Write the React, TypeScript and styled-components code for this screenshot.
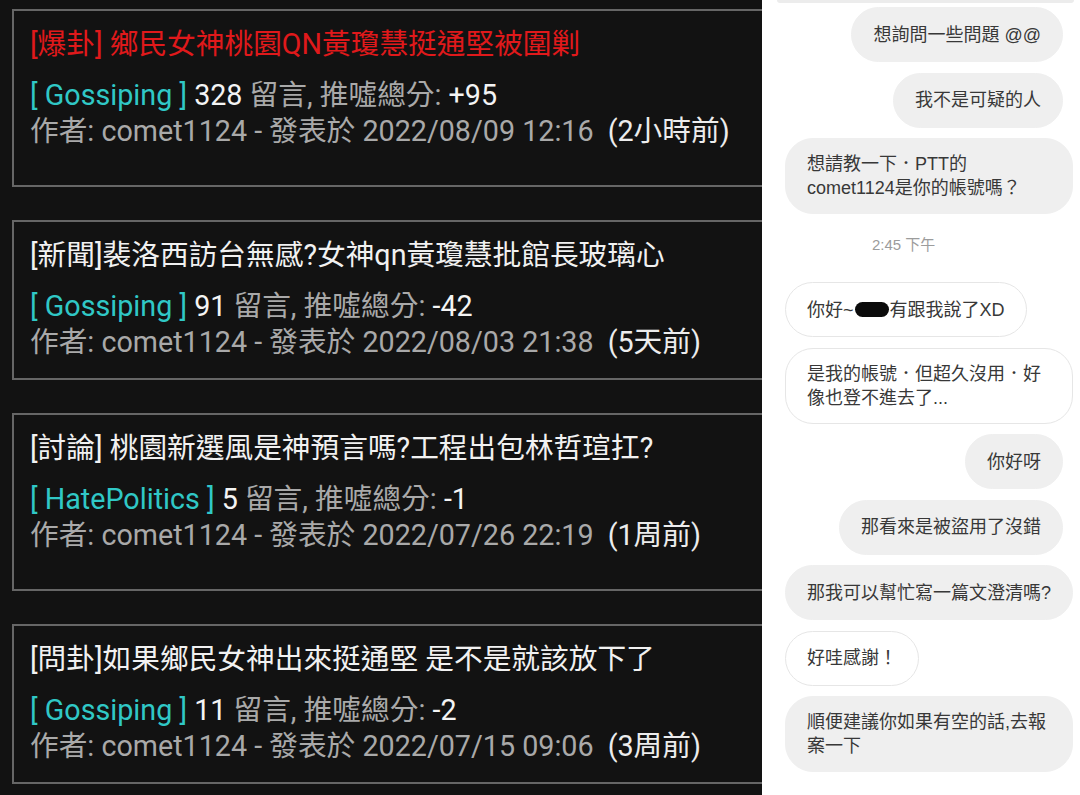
import React from 'react'
import styled, { createGlobalStyle } from 'styled-components'

const GlobalStyle = createGlobalStyle`
  html, body {
    margin: 0;
    padding: 0;
    background: #ffffff;
  }
  body {
    font-family: Roboto, "Noto Sans CJK TC", sans-serif;
  }
`

const Page = styled.div`
  display: flex;
  width: 1080px;
  height: 795px;
  overflow: hidden;
`

/* ---- left: PTT search results ---- */

const Results = styled.section`
  width: 762px;
  flex-shrink: 0;
  box-sizing: border-box;
  background: #121212;
  padding: 9px 0 0 12px;
  display: flex;
  flex-direction: column;
  gap: 33px;
  overflow: hidden;
  font-family: Roboto, "Noto Sans CJK TC", sans-serif;
`

const Card = styled.article<{ $tall?: boolean }>`
  border: 2px solid #666666;
  border-right: none;
  padding: 15px 0 ${props => (props.$tall ? 36 : 18)}px 16px;
`

const Title = styled.h2<{ $hot?: boolean }>`
  margin: 0 0 15px;
  font-size: 28.7px;
  font-weight: 400;
  line-height: 36px;
  white-space: nowrap;
  color: ${props => (props.$hot ? '#e0191b' : '#f1f1f1')};
`

const Meta = styled.div`
  font-size: 28.7px;
  line-height: 36px;
  white-space: nowrap;
  color: #a9a9a9;
`

const Board = styled.span`
  color: #30c8c6;
`

const Strong = styled.span`
  color: #f4f4f4;
`

const Ago = styled.span`
  margin-left: 14px;
  color: #ececec;
`

/* ---- right: chat ---- */

const Chat = styled.section`
  flex: 1;
  background: #ffffff;
  display: flex;
  flex-direction: column;
`

const Stub = styled.div`
  height: 3px;
  margin: 0 7px 0 15px;
  background: #ececec;
  border-radius: 0 0 4px 4px;
`

const Thread = styled.div`
  display: flex;
  flex-direction: column;
  gap: 10.5px;
  padding: 4px 8px 0 23px;
`

const Bubble = styled.div<{ $out?: boolean; $white?: boolean; $wide?: boolean }>`
  box-sizing: border-box;
  min-height: 55px;
  display: flex;
  align-items: center;
  padding: 13px 21px;
  border-radius: 28px;
  align-self: ${props => (props.$wide ? 'stretch' : props.$out ? 'flex-end' : 'flex-start')};
  margin-right: ${props => (props.$out ? 10 : 0)}px;
  background: ${props => (props.$white ? '#ffffff' : '#efefef')};
  border: 1px solid ${props => (props.$white ? '#e6e6e6' : '#efefef')};
  font-family: "Liberation Sans", "Noto Sans CJK TC", sans-serif;
  font-size: 18px;
  line-height: 24px;
  color: #383838;
  white-space: nowrap;
`

const Stamp = styled.div`
  height: 47px;
  box-sizing: border-box;
  padding: 9px 0 0 87px;
  font-family: "Liberation Sans", "Noto Sans CJK TC", sans-serif;
  font-size: 15px;
  line-height: 21px;
  color: #9c9c9c;
`

const Redacted = styled.span`
  display: inline-block;
  width: 34px;
  height: 15px;
  margin: 0 1px;
  vertical-align: -1px;
  background: #0b0b0b;
  border-radius: 8px;
`

type Post = {
  title: string
  hot?: boolean
  tall?: boolean
  board: string
  count: number
  score: string
  date: string
  ago: string
}

const posts: Post[] = [
  { title: '[爆卦] 鄉民女神桃園QN黃瓊慧挺通堅被圍剿', hot: true, tall: true, board: 'Gossiping', count: 328, score: '+95', date: '2022/08/09 12:16', ago: '(2小時前)' },
  { title: '[新聞]裴洛西訪台無感?女神qn黃瓊慧批館長玻璃心', board: 'Gossiping', count: 91, score: '-42', date: '2022/08/03 21:38', ago: '(5天前)' },
  { title: '[討論] 桃園新選風是神預言嗎?工程出包林哲瑄扛?', tall: true, board: 'HatePolitics', count: 5, score: '-1', date: '2022/07/26 22:19', ago: '(1周前)' },
  { title: '[問卦]如果鄉民女神出來挺通堅 是不是就該放下了', board: 'Gossiping', count: 11, score: '-2', date: '2022/07/15 09:06', ago: '(3周前)' },
]

const App = () => (
  <Page>
    <GlobalStyle />
    <Results>
      {posts.map(post => (
        <Card key={post.date} $tall={post.tall}>
          <Title $hot={post.hot}>{post.title}</Title>
          <Meta>
            <Board>[ {post.board} ]</Board> <Strong>{post.count}</Strong> 留言, 推噓總分: <Strong>{post.score}</Strong>
          </Meta>
          <Meta>
            作者: comet1124 - 發表於 {post.date}<Ago>{post.ago}</Ago>
          </Meta>
        </Card>
      ))}
    </Results>
    <Chat>
      <Stub />
      <Thread>
        <Bubble $out>想詢問一些問題 @@</Bubble>
        <Bubble $out>我不是可疑的人</Bubble>
        <Bubble $wide>
          <span>想請教一下．PTT的<br />comet1124是你的帳號嗎？</span>
        </Bubble>
        <Stamp>2:45 下午</Stamp>
        <Bubble $white>
          <span>你好~<Redacted />有跟我說了XD</span>
        </Bubble>
        <Bubble $white $wide>
          <span>是我的帳號．但超久沒用．好<br />像也登不進去了...</span>
        </Bubble>
        <Bubble $out>你好呀</Bubble>
        <Bubble $out>那看來是被盜用了沒錯</Bubble>
        <Bubble $wide>那我可以幫忙寫一篇文澄清嗎?</Bubble>
        <Bubble $white>好哇感謝！</Bubble>
        <Bubble $wide>
          <span>順便建議你如果有空的話,去報<br />案一下</span>
        </Bubble>
      </Thread>
    </Chat>
  </Page>
)

export default App
